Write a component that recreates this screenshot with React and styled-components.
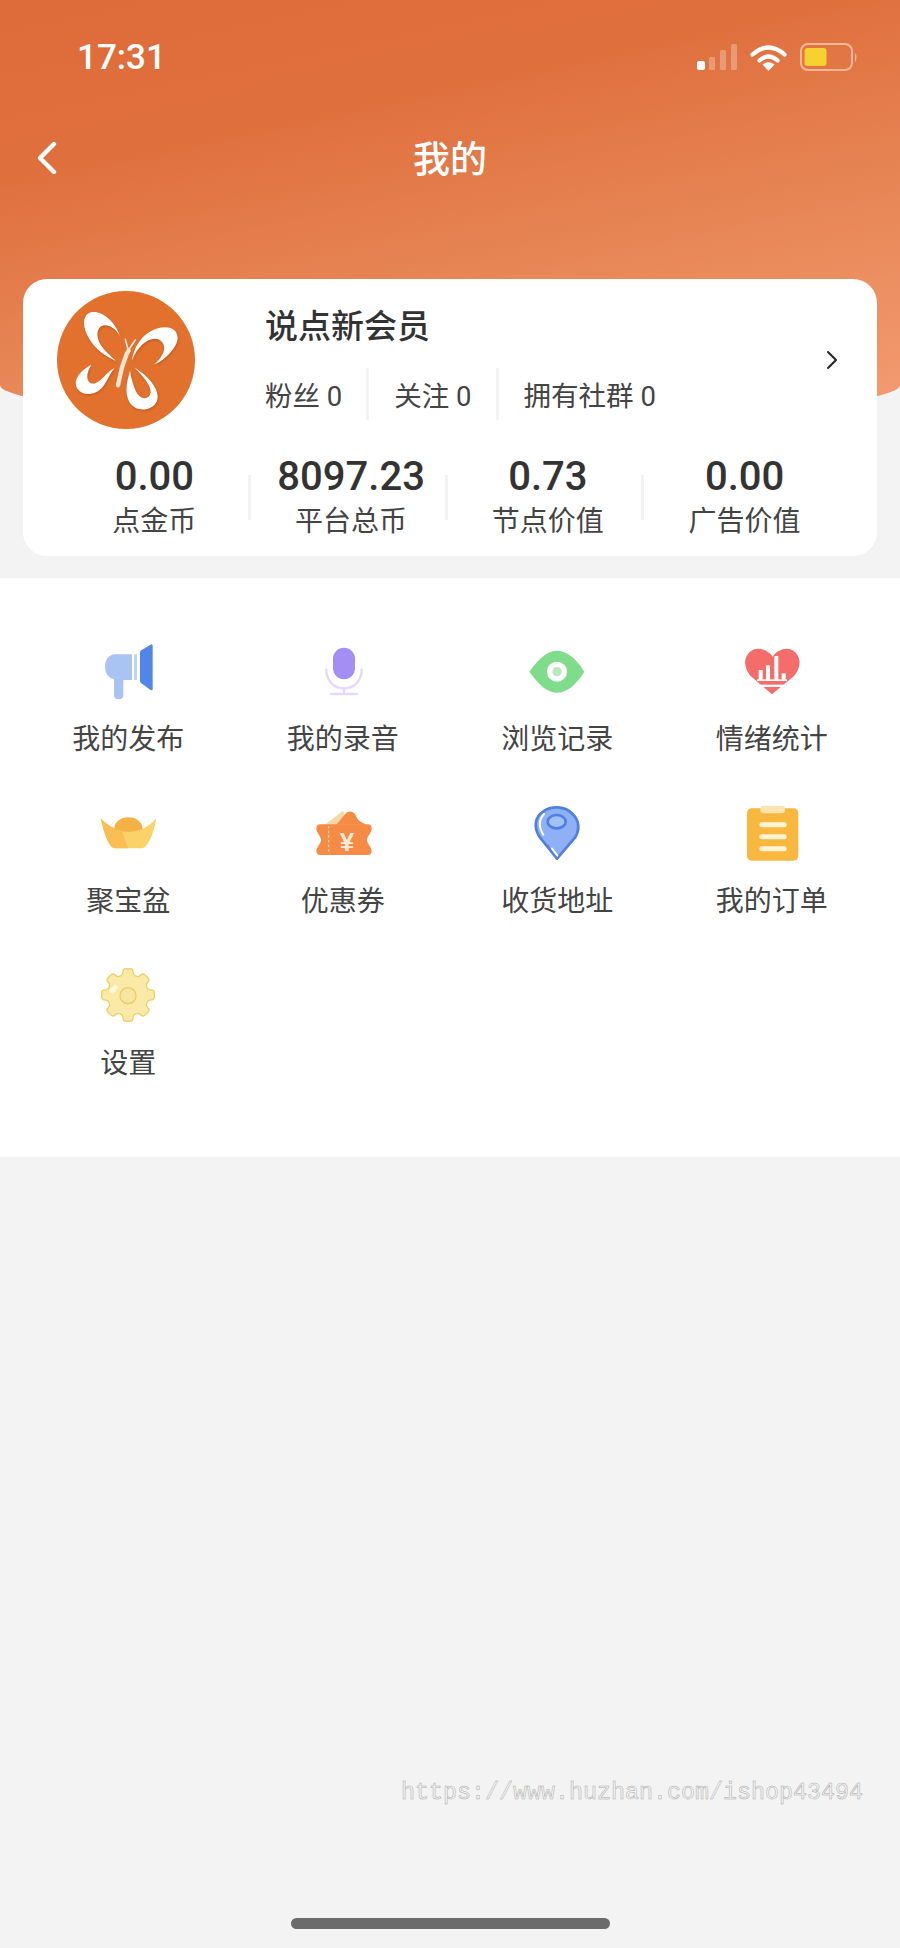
import React from 'react'
import styled, { createGlobalStyle } from 'styled-components'

const GlobalStyle = createGlobalStyle`
  html, body {
    margin: 0;
    padding: 0;
    background: #f3f3f3;
  }
  * {
    box-sizing: border-box;
  }
`

const FONT = `Roboto, "Noto Sans CJK SC", sans-serif`

//-----------------------------------------------------------------------------
// Icons
//-----------------------------------------------------------------------------
const SignalIcon = () => (
  <svg width="40" height="26" viewBox="0 0 40 26">
    <rect x="0" y="17" width="8" height="9" rx="2" fill="#fff" />
    <rect x="12" y="13" width="6" height="13" rx="1.5" fill="#fff" fillOpacity="0.28" />
    <rect x="23" y="6" width="6" height="20" rx="1.5" fill="#fff" fillOpacity="0.28" />
    <rect x="34" y="0" width="6" height="26" rx="1.5" fill="#fff" fillOpacity="0.28" />
  </svg>
)

const WifiIcon = () => (
  <svg width="37" height="27" viewBox="0 0 37 27" fill="none">
    <path d="M2.5 10.5 Q18.5 -3.5 34.5 10.5" stroke="#fff" strokeWidth="4.2" strokeLinecap="round" />
    <path d="M9.5 16.5 Q18.5 8.5 27.5 16.5" stroke="#fff" strokeWidth="4.2" strokeLinecap="round" />
    <path d="M18.5 27 L12.5 20.5 Q18.5 16 24.5 20.5 Z" fill="#fff" />
  </svg>
)

const BatteryIcon = () => (
  <svg width="58" height="28" viewBox="0 0 58 28" fill="none">
    <rect x="1" y="1" width="51" height="26" rx="7" stroke="#f6b698" strokeWidth="2" />
    <rect x="4.5" y="5" width="22" height="18" rx="3" fill="#f7d130" />
    <path d="M55 9.5 Q58 14 55 19 Z" fill="#f6b698" />
  </svg>
)

const BackIcon = () => (
  <svg width="24" height="34" viewBox="0 0 24 34" fill="none">
    <path d="M19 3 L5 17 L19 31" stroke="#fff" strokeWidth="4.4" strokeLinecap="round" strokeLinejoin="round" />
  </svg>
)

const ChevronIcon = () => (
  <svg width="12" height="20" viewBox="0 0 12 20" fill="none">
    <path d="M2 2 L10 10 L2 18" stroke="#222" strokeWidth="2" strokeLinecap="round" strokeLinejoin="round" />
  </svg>
)

const ButterflyLogo = () => (
  <LogoSvg viewBox="53 33 414 414">
    <circle cx="260" cy="240" r="207" fill="#e2712e" />
    <LogoWings>
      <path d="M242 168 C226 122 186 90 155 97 C128 105 128 142 150 177 C170 210 200 230 230 243 C200 215 166 186 176 152 C184 125 222 132 242 168Z" fill="#fff" />
      <path d="M278 242 C285 190 322 145 375 142 C416 141 426 176 402 206 C386 228 366 245 345 253 C375 226 386 196 360 179 C330 168 296 196 278 242Z" fill="#fff" />
      <path d="M226 264 C200 276 190 302 168 310 C148 316 132 294 156 254 C124 270 98 300 114 326 C130 350 170 346 190 321 C206 300 210 282 226 264Z" fill="#fff" />
      <path d="M272 272 C264 300 254 336 270 366 C286 396 336 396 352 365 C366 334 330 290 285 262 C314 292 348 330 328 350 C304 366 284 340 272 272Z" fill="#fff" />
    </LogoWings>
    <path d="M236 316 L248 262 L262 222 L268 212" stroke="#fbe6d6" strokeWidth="13" strokeLinecap="round" fill="none" />
    <path d="M266 208 L258 178 M270 206 L288 180" stroke="#fbe6d6" strokeWidth="5" strokeLinecap="round" fill="none" />
  </LogoSvg>
)

const MegaphoneIcon = () => (
  <IconSvg viewBox="108 57 192 192">
    <path d="M135 141 C135 118 148 103 166 103 L216 103 L216 180 L190 180 L190 225 Q190 238 176 238 Q162 238 162 225 L162 178 Q135 170 135 141Z" fill="#a9c4f3" />
    <rect x="222" y="103" width="9" height="77" fill="#bcd2f6" />
    <path d="M240 98 Q240 94 244 91 L272 74 Q278 71 278 78 L278 206 Q278 213 272 210 L244 190 Q240 187 240 183Z" fill="#4f86e8" />
  </IconSvg>
)

const MicIcon = () => (
  <IconSvg viewBox="750 57 192 192">
    <path d="M796 148 C796 190 825 205 849 205 C873 205 902 190 902 148" fill="none" stroke="#e4daf8" strokeWidth="7" strokeLinecap="round" />
    <path d="M849 205 L849 222 M810 222 L888 222" stroke="#e4daf8" strokeWidth="7" strokeLinecap="round" />
    <rect x="816" y="83" width="66" height="95" rx="33" fill="#a48df5" />
  </IconSvg>
)

const EyeIcon = () => (
  <IconSvg viewBox="135 57 192 192">
    <path d="M148 155 C180 110 205 92 231 92 C257 92 285 110 313 155 C285 200 257 218 231 218 C205 218 180 200 148 155Z" fill="#7fdc8a" />
    <circle cx="231" cy="155" r="30" fill="#fff" />
    <circle cx="231" cy="155" r="14" fill="#b7e8be" />
  </IconSvg>
)

const HeartIcon = () => (
  <IconSvg viewBox="777 57 192 192">
    <path d="M875 110 C858 85 822 78 804 98 C786 118 790 145 808 167 L873 223 L940 167 C958 145 962 118 944 98 C926 78 892 85 875 110Z" fill="#f46d6b" />
    <rect x="833" y="150" width="12" height="30" rx="2" fill="#fff" />
    <rect x="855" y="136" width="12" height="44" rx="2" fill="#fff" />
    <rect x="880" y="108" width="12" height="72" rx="2" fill="#fff" />
    <rect x="902" y="160" width="12" height="20" rx="2" fill="#fff" />
    <rect x="828" y="178" width="90" height="5" fill="#fff" />
    <rect x="820" y="194" width="108" height="7" fill="#fff" />
  </IconSvg>
)

const IngotIcon = () => (
  <IconSvg viewBox="108 33 192 192">
    <ellipse cx="205" cy="115" rx="42" ry="33" fill="#f3b243" />
    <path d="M122 85 C150 115 175 125 205 125 C235 125 265 115 288 85 C285 120 265 175 245 175 L165 175 C145 175 130 120 122 85Z" fill="#fbd26a" />
    <path d="M122 85 C140 105 165 118 185 122 L205 175 L165 175 C145 175 130 120 122 85Z" fill="#f9bf55" />
  </IconSvg>
)

const CouponIcon = () => (
  <IconSvg viewBox="750 33 192 192">
    <path d="M792 104 L846 62 L864 104Z" fill="#f6d7a6" />
    <path d="M826 104 L856 68 C868 60 882 66 886 80 C892 94 905 98 916 104Z" fill="#f58b45" />
    <path d="M778 103 H920 Q932 103 932 115 C932 130 918 138 918 150 C918 162 932 170 932 184 Q932 195 920 195 H778 Q766 195 766 184 C766 170 780 162 780 150 C780 138 766 130 766 115 Q766 103 778 103Z" fill="#f58b45" />
    <path d="M803 108 L803 192" stroke="#fbd9bd" strokeWidth="4" strokeDasharray="7 7" />
    <text x="858" y="182" textAnchor="middle" fontFamily="'Liberation Sans', sans-serif" fontWeight="700" fontSize="78" fill="#fdeadc">¥</text>
  </IconSvg>
)

const PinIcon = () => (
  <IconSvg viewBox="135 33 192 192">
    <path d="M231 206 L178 140 C160 110 165 80 190 64 C215 46 255 48 278 72 C298 92 300 120 285 143Z" fill="#8fb0f5" stroke="#4f7fe0" strokeWidth="8" strokeLinejoin="round" />
    <path d="M192 72 C176 90 176 112 190 134" fill="none" stroke="#fff" strokeWidth="6" strokeLinecap="round" />
    <ellipse cx="230" cy="95" rx="27" ry="20" fill="#a4c0f8" stroke="#4f7fe0" strokeWidth="8" />
    <path d="M216 176 L232 197" stroke="#fff" strokeWidth="6" strokeLinecap="round" />
    <circle cx="204" cy="168" r="4" fill="#4f7fe0" />
  </IconSvg>
)

const ClipboardIcon = () => (
  <IconSvg viewBox="777 33 192 192">
    <rect x="798" y="55" width="154" height="157" rx="14" fill="#f8b73f" />
    <rect x="838" y="47" width="74" height="23" rx="10" fill="#fce3b0" />
    <rect x="835" y="97" width="82" height="15" rx="7" fill="#fff3d6" />
    <rect x="835" y="133" width="82" height="15" rx="7" fill="#fff3d6" />
    <rect x="835" y="169" width="82" height="15" rx="7" fill="#fff3d6" />
  </IconSvg>
)

// 8 teeth with softened corners, radii read off the reference
const gearPath = (cx, cy, outer, inner) => {
  const points = []
  for (let i = 0; i < 8; i++) {
    const mid = (i * Math.PI) / 4 - Math.PI / 2
    const offsets = [[-0.27, inner], [-0.17, outer], [0.17, outer], [0.27, inner]]
    offsets.forEach(([da, r]) => {
      points.push([cx + r * Math.cos(mid + da), cy + r * Math.sin(mid + da)])
    })
  }
  const lerp = (a, b, t) => [a[0] + (b[0] - a[0]) * t, a[1] + (b[1] - a[1]) * t]
  let d = ''
  points.forEach((p, i) => {
    const prev = points[(i + points.length - 1) % points.length]
    const next = points[(i + 1) % points.length]
    const from = lerp(p, prev, 0.3)
    const to = lerp(p, next, 0.3)
    d += `${i === 0 ? 'M' : 'L'}${from[0].toFixed(1)} ${from[1].toFixed(1)} Q${p[0].toFixed(1)} ${p[1].toFixed(1)} ${to[0].toFixed(1)} ${to[1].toFixed(1)} `
  })
  return d + 'Z'
}

const GearIcon = () => (
  <IconSvg viewBox="109 36 192 192">
    <path d={gearPath(205, 132, 80, 62)} fill="#fbe9a8" stroke="#e8d267" strokeWidth="4" />
    <path d="M148 120 L166 100 L176 108 L160 130Z" fill="#fff8dc" />
    <circle cx="205" cy="134" r="24" fill="#fae5a0" stroke="#e6cd63" strokeWidth="4" />
  </IconSvg>
)

//-----------------------------------------------------------------------------
// Data
//-----------------------------------------------------------------------------
const stats = [
  { value: '0.00', label: '点金币' },
  { value: '8097.23', label: '平台总币' },
  { value: '0.73', label: '节点价值' },
  { value: '0.00', label: '广告价值' }
]

const menuItems = [
  { label: '我的发布', icon: <MegaphoneIcon /> },
  { label: '我的录音', icon: <MicIcon /> },
  { label: '浏览记录', icon: <EyeIcon /> },
  { label: '情绪统计', icon: <HeartIcon /> },
  { label: '聚宝盆', icon: <IngotIcon /> },
  { label: '优惠券', icon: <CouponIcon /> },
  { label: '收货地址', icon: <PinIcon /> },
  { label: '我的订单', icon: <ClipboardIcon /> },
  { label: '设置', icon: <GearIcon /> }
]

//-----------------------------------------------------------------------------
// Component
//-----------------------------------------------------------------------------
export default function App() {
  return (
    <Page>
      <GlobalStyle />
      <Hero>
        <StatusBar>
          <Time>17:31</Time>
          <StatusIcons>
            <SignalIcon />
            <WifiIcon />
            <BatteryIcon />
          </StatusIcons>
        </StatusBar>
        <NavBar>
          <BackButton><BackIcon /></BackButton>
          <Title>我的</Title>
        </NavBar>
        <Card>
          <Profile>
            <ButterflyLogo />
            <ProfileInfo>
              <Name>说点新会员</Name>
              <Follows>
                <Follow>粉丝 0</Follow>
                <Follow>关注 0</Follow>
                <Follow>拥有社群 0</Follow>
              </Follows>
            </ProfileInfo>
            <ChevronWrap><ChevronIcon /></ChevronWrap>
          </Profile>
          <Stats>
            {stats.map(stat => (
              <Stat key={stat.label}>
                <StatValue>{stat.value}</StatValue>
                <StatLabel>{stat.label}</StatLabel>
              </Stat>
            ))}
          </Stats>
        </Card>
      </Hero>
      <Menu>
        {menuItems.map(item => (
          <MenuItem key={item.label}>
            {item.icon}
            <MenuLabel>{item.label}</MenuLabel>
          </MenuItem>
        ))}
      </Menu>
      <Footer>
        <Watermark>https://www.huzhan.com/ishop43494</Watermark>
        <HomeIndicator />
      </Footer>
    </Page>
  )
}

//-----------------------------------------------------------------------------
// Styled Components
//-----------------------------------------------------------------------------
const Page = styled.div`
  width: 900px;
  height: 1948px;
  overflow: hidden;
  background: #f3f3f3;
  font-family: ${FONT};
  color: #333;
`

const Hero = styled.div`
  position: relative;
  &::before {
    content: "";
    position: absolute;
    top: 0;
    left: 0;
    width: 100%;
    height: 420px;
    background: linear-gradient(168deg, #de6c3a 0%, #df6f3d 28%, #e98a5a 68%, #f49c74 100%);
    border-radius: 0 0 50% 50% / 0 0 35px 35px;
  }
`

const StatusBar = styled.div`
  position: relative;
  height: 114px;
  padding: 0 42px 0 77px;
  display: flex;
  justify-content: space-between;
  align-items: center;
`

const Time = styled.div`
  font-size: 35px;
  font-weight: 500;
  color: #fff;
`

const StatusIcons = styled.div`
  display: flex;
  align-items: center;
  gap: 13px;
`

const NavBar = styled.div`
  position: relative;
  height: 92px;
  padding-bottom: 7px;
  display: flex;
  justify-content: center;
  align-items: center;
`

const BackButton = styled.div`
  position: absolute;
  left: 35px;
  top: 27px;
  display: flex;
`

const Title = styled.div`
  font-size: 37px;
  font-weight: 500;
  color: #fff;
`

const Card = styled.div`
  position: relative;
  margin: 73px 23px 0 23px;
  height: 277px;
  padding: 12px 34px 0 33px;
  background: #fff;
  border-radius: 24px;
`

const Profile = styled.div`
  display: flex;
  align-items: center;
  height: 138px;
  padding-left: 1px;
`

const LogoSvg = styled.svg`
  width: 138px;
  height: 138px;
  flex-shrink: 0;
`

const LogoWings = styled.g`
  filter: drop-shadow(2px 4px 3px #c25a20);
`

const ProfileInfo = styled.div`
  margin-left: 70px;
  align-self: flex-start;
  padding-top: 16px;
`

const Name = styled.div`
  font-size: 33px;
  font-weight: 500;
  line-height: 40px;
  color: #333;
`

const Follows = styled.div`
  display: flex;
  margin-top: 21px;
`

const Follow = styled.div`
  display: flex;
  align-items: center;
  height: 52px;
  font-size: 27.5px;
  color: #444;
  white-space: pre;
  & + & {
    margin-left: 24px;
    padding-left: 25px;
    border-left: 3px solid #f3f3f3;
  }
`

const ChevronWrap = styled.div`
  display: flex;
  margin-left: auto;
  margin-right: 5px;
`

const Stats = styled.div`
  display: grid;
  grid-template-columns: repeat(4, 1fr);
  margin-top: 25px;
`

const Stat = styled.div`
  position: relative;
  display: flex;
  flex-direction: column;
  align-items: center;
  & + &::before {
    content: "";
    position: absolute;
    left: -5px;
    top: 21px;
    width: 3px;
    height: 45px;
    background: #f3f3f3;
  }
`

const StatValue = styled.div`
  font-size: 40px;
  font-weight: 500;
  line-height: 46px;
  color: #333;
`

const StatLabel = styled.div`
  margin-top: 2px;
  font-size: 28px;
  line-height: 40px;
  color: #444;
`

const Menu = styled.div`
  margin-top: 22px;
  height: 579px;
  padding: 61px 21px 73px;
  background: #fff;
  display: grid;
  grid-template-columns: repeat(4, 1fr);
  grid-auto-rows: 121px;
  row-gap: 41px;
`

const MenuItem = styled.div`
  display: flex;
  flex-direction: column;
  align-items: center;
`

const IconSvg = styled.svg`
  width: 64px;
  height: 64px;
  flex-shrink: 0;
`

const MenuLabel = styled.div`
  margin-top: 17px;
  font-size: 28px;
  line-height: 40px;
  color: #444;
`

const Footer = styled.div`
  display: flex;
  flex-direction: column;
`

const Watermark = styled.div`
  align-self: flex-end;
  margin-top: 622px;
  margin-right: 37px;
  font-family: "Liberation Mono", monospace;
  font-size: 23.33px;
  line-height: 28px;
  color: transparent;
  -webkit-text-stroke: 0.5px #aaa;
`

const HomeIndicator = styled.div`
  align-self: center;
  margin-top: 111px;
  width: 319px;
  height: 11px;
  border-radius: 6px;
  background: #6b6b6b;
`
